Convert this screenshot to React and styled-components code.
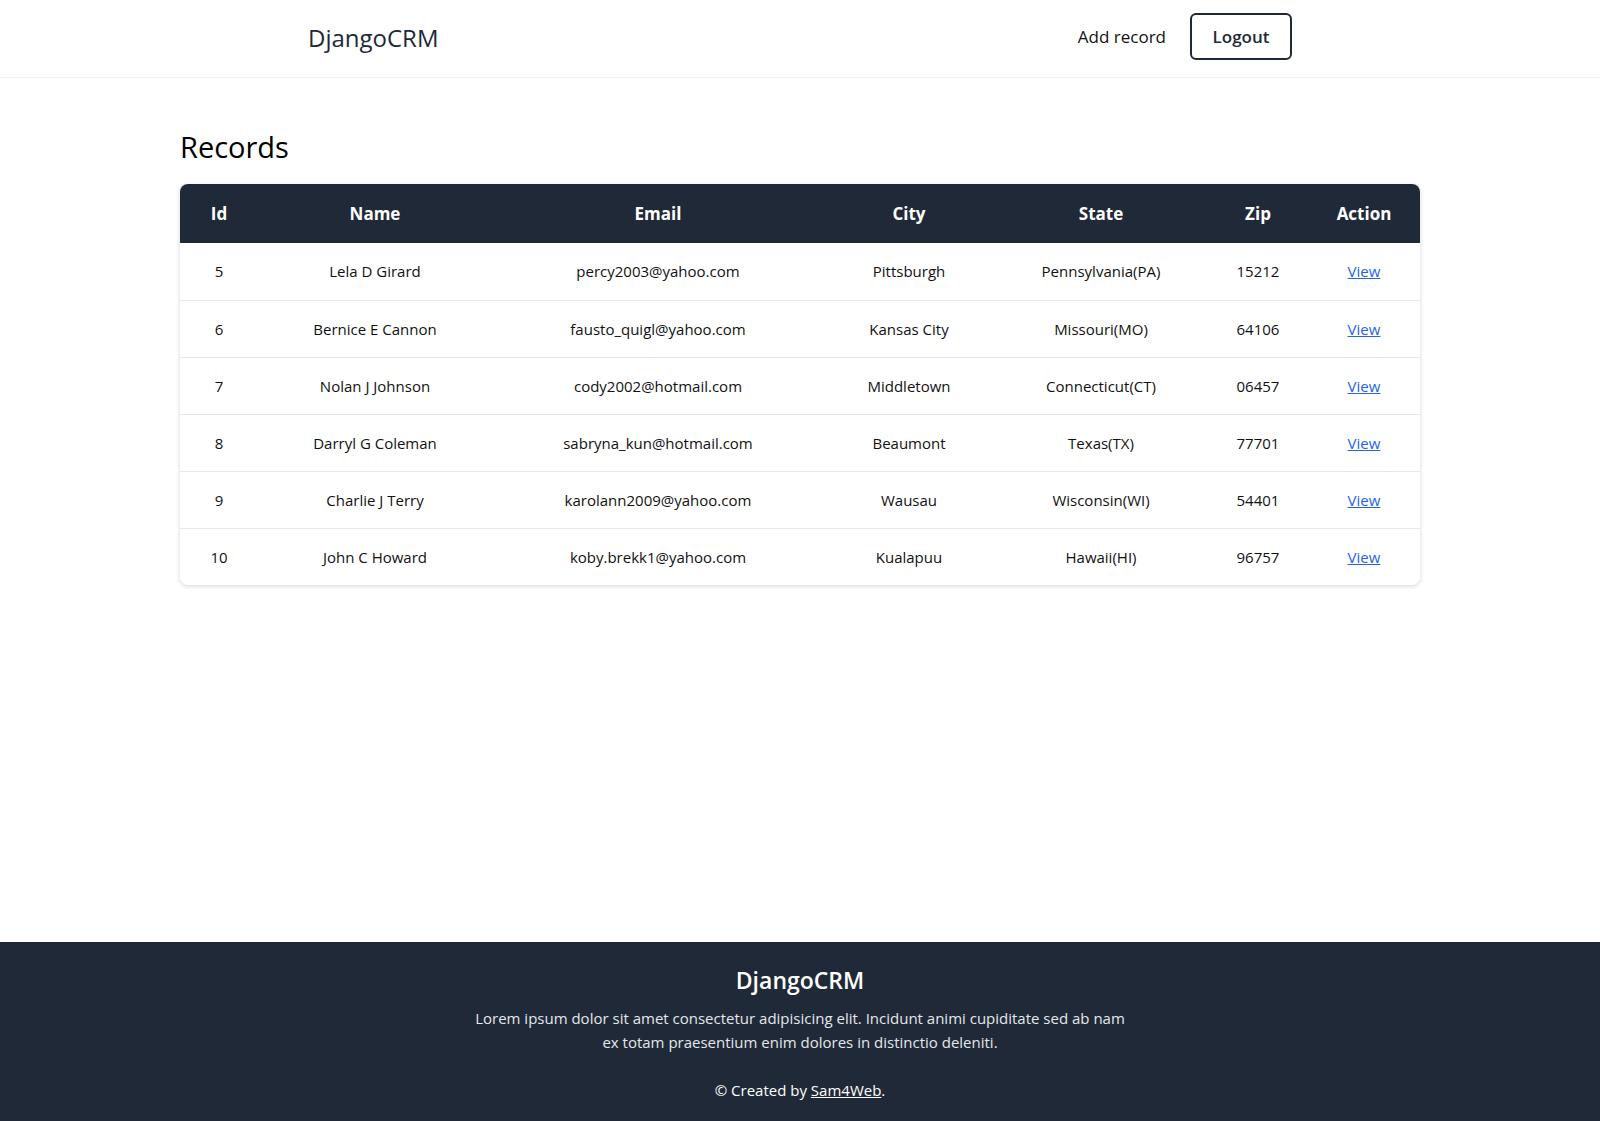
import React from 'react';
import styled, {createGlobalStyle} from 'styled-components';

const records = [
    {id: 5, name: 'Lela D Girard', email: 'percy2003@yahoo.com', city: 'Pittsburgh', state: 'Pennsylvania(PA)', zip: '15212'},
    {id: 6, name: 'Bernice E Cannon', email: 'fausto_quigl@yahoo.com', city: 'Kansas City', state: 'Missouri(MO)', zip: '64106'},
    {id: 7, name: 'Nolan J Johnson', email: 'cody2002@hotmail.com', city: 'Middletown', state: 'Connecticut(CT)', zip: '06457'},
    {id: 8, name: 'Darryl G Coleman', email: 'sabryna_kun@hotmail.com', city: 'Beaumont', state: 'Texas(TX)', zip: '77701'},
    {id: 9, name: 'Charlie J Terry', email: 'karolann2009@yahoo.com', city: 'Wausau', state: 'Wisconsin(WI)', zip: '54401'},
    {id: 10, name: 'John C Howard', email: 'koby.brekk1@yahoo.com', city: 'Kualapuu', state: 'Hawaii(HI)', zip: '96757'},
]

const columns = [
    {label: 'Id', width: 78},
    {label: 'Name', width: 234},
    {label: 'Email', width: 332},
    {label: 'City', width: 170},
    {label: 'State', width: 214},
    {label: 'Zip', width: 100},
    {label: 'Action', width: 112},
]

function App() {
    return (
        <>
            <GlobalStyle />
            <Page>
                <Nav>
                    <NavInner>
                        <Logo href="#">DjangoCRM</Logo>
                        <NavLinks>
                            <NavLink href="#">Add record</NavLink>
                            <LogoutButton>Logout</LogoutButton>
                        </NavLinks>
                    </NavInner>
                </Nav>
                <Main>
                    <Title>Records</Title>
                    <TableCard>
                        <Table>
                            <colgroup>
                                {columns.map(col => (
                                    <col key={col.label} style={{width: col.width}} />
                                ))}
                            </colgroup>
                            <thead>
                                <tr>
                                    {columns.map(col => (
                                        <Th key={col.label}>{col.label}</Th>
                                    ))}
                                </tr>
                            </thead>
                            <tbody>
                                {records.map(r => (
                                    <Row key={r.id}>
                                        <Td>{r.id}</Td>
                                        <Td>{r.name}</Td>
                                        <Td>{r.email}</Td>
                                        <Td>{r.city}</Td>
                                        <Td>{r.state}</Td>
                                        <Td>{r.zip}</Td>
                                        <Td><ViewLink href="#">View</ViewLink></Td>
                                    </Row>
                                ))}
                            </tbody>
                        </Table>
                    </TableCard>
                </Main>
                <Footer>
                    <FooterTitle>DjangoCRM</FooterTitle>
                    <FooterText>
                        Lorem ipsum dolor sit amet consectetur adipisicing elit. Incidunt animi cupiditate sed ab nam ex totam praesentium enim dolores in distinctio deleniti.
                    </FooterText>
                    <Credit>© Created by <a href="#">Sam4Web</a>.</Credit>
                </Footer>
            </Page>
        </>
    );
}

const GlobalStyle = createGlobalStyle`
    *{
        box-sizing: border-box;
    }
    body{
        margin: 0;
        font-family: "Open Sans", "Noto Sans", sans-serif;
        color: #111;
        background: #fff;
    }
`
const Page = styled.div`
    min-height: 100vh;
    display: flex;
    flex-direction: column;
`
const Nav = styled.nav`
    border-bottom: 1px solid #f1f1f3;
`
const NavInner = styled.div`
    max-width: 1024px;
    margin: 0 auto;
    padding: 0 20px 5px;
    height: 77px;
    display: flex;
    align-items: center;
    justify-content: space-between;
`
const Logo = styled.a`
    margin-top: 2px;
    font-size: 24px;
    font-weight: 500;
    color: #1f2937;
    text-decoration: none;
`
const NavLinks = styled.div`
    display: flex;
    align-items: center;
    gap: 24px;
`
const NavLink = styled.a`
    font-size: 17px;
    color: #111;
    text-decoration: none;
`
const LogoutButton = styled.button`
    font-family: inherit;
    font-size: 17px;
    font-weight: 600;
    color: #1f2937;
    background: #fff;
    border: 2px solid #1f2937;
    border-radius: 6px;
    width: 102px;
    height: 47px;
    cursor: pointer;
`
const Main = styled.main`
    flex: 1;
    width: 1240px;
    margin: 0 auto;
    padding-top: 51px;
`
const Title = styled.h1`
    margin: 0 0 19px;
    font-size: 29px;
    line-height: 36px;
    font-weight: 500;
    color: #000;
`
const TableCard = styled.div`
    border-radius: 8px;
    overflow: hidden;
    box-shadow: 0 1px 4px rgba(0,0,0,0.12), 0 2px 6px rgba(0,0,0,0.05);
`
const Table = styled.table`
    width: 100%;
    border-collapse: collapse;
    table-layout: fixed;
`
const Th = styled.th`
    height: 59px;
    background: #1f2937;
    color: #fff;
    font-size: 17px;
    font-weight: 700;
    text-align: center;
    padding: 0;
`
const Row = styled.tr`
    border-bottom: 1px solid #e5e7eb;
    &:last-child{
        border-bottom: none;
    }
`
const Td = styled.td`
    height: 57px;
    text-align: center;
    font-size: 15px;
    color: #111;
    padding: 0;
`
const ViewLink = styled.a`
    color: #2563eb;
    text-decoration: underline;
`
const Footer = styled.footer`
    background: #1f2937;
    color: #fff;
    text-align: center;
    padding: 22px 0 19px;
`
const FooterTitle = styled.h2`
    margin: 0 0 10px;
    font-size: 23px;
    line-height: 32px;
    font-weight: 600;
`
const FooterText = styled.p`
    margin: 0 auto;
    max-width: 650px;
    font-size: 15px;
    line-height: 24px;
    color: #e5e7eb;
`
const Credit = styled.p`
    margin: 24px 0 0;
    font-size: 15px;
    line-height: 24px;
    a{
        color: #fff;
    }
`

export default App;
